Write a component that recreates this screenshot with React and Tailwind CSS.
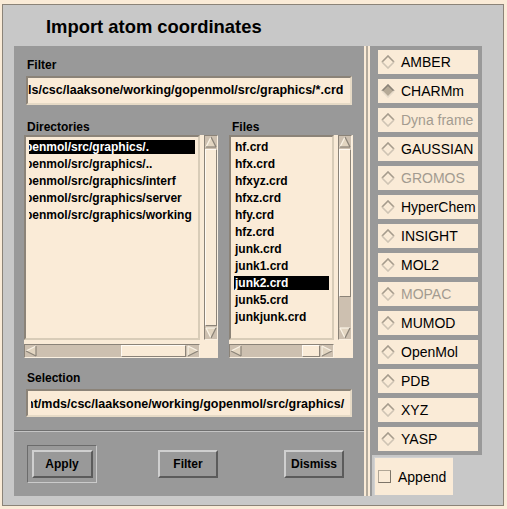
import React from "react";

function Arrow({ dir }) {
  const polys = {
    up: { p: "6,1 11,11 1,11", light: [[6, 1, 1, 11]], dark: [[6, 1, 11, 11], [1, 11, 11, 11]] },
    down: { p: "1,1 11,1 6,11", light: [[1, 1, 11, 1], [1, 1, 6, 11]], dark: [[11, 1, 6, 11]] },
    left: { p: "1,6 11,1 11,11", light: [[1, 6, 11, 1]], dark: [[11, 1, 11, 11], [1, 6, 11, 11]] },
    right: { p: "1,1 11,6 1,11", light: [[1, 1, 1, 11], [1, 1, 11, 6]], dark: [[1, 11, 11, 6]] },
  }[dir];
  return (
    <svg width="12" height="12" viewBox="0 0 12 12" className="block shrink-0">
      <polygon points={polys.p} fill="#e2d5c1" />
      {polys.light.map((l, i) => (
        <line key={"l" + i} x1={l[0]} y1={l[1]} x2={l[2]} y2={l[3]} stroke="#fbf3e6" strokeWidth="1.2" />
      ))}
      {polys.dark.map((l, i) => (
        <line key={"d" + i} x1={l[0]} y1={l[1]} x2={l[2]} y2={l[3]} stroke="#8b8378" strokeWidth="1.2" />
      ))}
    </svg>
  );
}

function VScroll({ full }) {
  return (
    <div className="w-[14px] h-[205px] bg-[#cdc0b0] border border-t-[#8b8378] border-l-[#8b8378] border-b-[#fbf1e2] border-r-[#fbf1e2] flex flex-col">
      <Arrow dir="up" />
      <div className="flex-1 flex flex-col my-[1px]">
        {full ? (
          <div className="flex-1 bg-[#faebd7] border border-t-[#fffaf3] border-l-[#fffaf3] border-b-[#8b8378] border-r-[#8b8378]" />
        ) : (
          <>
            <div className="h-[148px] bg-[#faebd7] border border-t-[#fffaf3] border-l-[#fffaf3] border-b-[#8b8378] border-r-[#8b8378]" />
            <div className="flex-1" />
          </>
        )}
      </div>
      <Arrow dir="down" />
    </div>
  );
}

function HScroll({ w, sliderW }) {
  return (
    <div
      className="h-[14px] bg-[#cdc0b0] border border-t-[#8b8378] border-l-[#8b8378] border-b-[#fbf1e2] border-r-[#fbf1e2] flex flex-row"
      style={{ width: w }}
    >
      <Arrow dir="left" />
      <div className="flex-1 flex flex-row justify-end mx-[1px]">
        <div
          className="h-full bg-[#faebd7] border border-t-[#fffaf3] border-l-[#fffaf3] border-b-[#8b8378] border-r-[#8b8378]"
          style={{ width: sliderW }}
        />
      </div>
      <Arrow dir="right" />
    </div>
  );
}

function ListRow({ text, selected, offset }) {
  return (
    <div className="h-[17px] shrink-0">
      <div
        className={
          "h-[14px] leading-[14px] text-[12px] font-bold whitespace-nowrap overflow-hidden " +
          (selected ? "bg-black text-white" : "text-black")
        }
      >
        <span className={offset ? "inline-block ml-[-4px]" : "inline-block ml-[1px]"}>{text}</span>
      </div>
    </div>
  );
}

function Diamond({ on }) {
  return (
    <svg width="14" height="14" viewBox="0 0 14 14" className="block shrink-0">
      <polygon points="7,1 13,7 7,13 1,7" fill={on ? "#b5a996" : "#faebd7"} />
      <polyline points="1,7 7,1 13,7" fill="none" stroke={on ? "#8b8378" : "#a59b8c"} strokeWidth="1.6" />
      <polyline points="1,7 7,13 13,7" fill="none" stroke={on ? "#e8dccb" : "#cfc4b4"} strokeWidth="1.6" />
    </svg>
  );
}

function Toggle({ label, on, disabled }) {
  return (
    <div className="h-[24px] w-[100px] bg-[#faebd7] flex items-center pl-[3px] gap-[6px]">
      <Diamond on={on} />
      <span className={"text-[14px] leading-[16px] whitespace-nowrap " + (disabled ? "text-[#a39b90]" : "text-black")}>
        {label}
      </span>
    </div>
  );
}

function Button({ label }) {
  return (
    <div className="w-[60px] h-[28px] bg-[#999999] border-2 border-t-[#cfcfcf] border-l-[#cfcfcf] border-b-[#5b5b5b] border-r-[#5b5b5b] flex items-center justify-center text-[12px] font-bold text-black">
      {label}
    </div>
  );
}

export default function App() {
  const dirs = [
    "penmol/src/graphics/.",
    "penmol/src/graphics/..",
    "penmol/src/graphics/interf",
    "penmol/src/graphics/server",
    "penmol/src/graphics/working",
  ];
  const files = [
    "hf.crd",
    "hfx.crd",
    "hfxyz.crd",
    "hfxz.crd",
    "hfy.crd",
    "hfz.crd",
    "junk.crd",
    "junk1.crd",
    "junk2.crd",
    "junk5.crd",
    "junkjunk.crd",
  ];
  const toggles = [
    ["AMBER"],
    ["CHARMm", true],
    ["Dyna frame", false, true],
    ["GAUSSIAN"],
    ["GROMOS", false, true],
    ["HyperChem"],
    ["INSIGHT"],
    ["MOL2"],
    ["MOPAC", false, true],
    ["MUMOD"],
    ["OpenMol"],
    ["PDB"],
    ["XYZ"],
    ["YASP"],
  ];

  return (
    <div className="w-[507px] h-[509px] bg-[#faebd7] pt-[4px] pl-[2px] pr-[3px] pb-[3px] font-['Liberation_Sans',Arial,sans-serif] overflow-hidden">
      <div className="w-full h-full border border-[#8b8378] bg-[#c8c8c8] flex flex-col">
        {/* Title */}
        <div className="h-[41px] shrink-0 pl-[43px] pt-[11px]">
          <div className="text-[18.4px] leading-[22px] font-bold text-black">Import atom coordinates</div>
        </div>

        {/* Body */}
        <div className="h-[450px] shrink-0 flex flex-row">
          {/* Left panel */}
          <div className="ml-[11px] w-[350px] h-full bg-[#999999] flex flex-col">
            <div className="mt-[12px] ml-[13px] h-[14px] leading-[14px] text-[12px] font-bold text-black">Filter</div>
            <div className="mt-[4px] ml-[12px] w-[326px] h-[29px] bg-[#faebd7] border-2 border-t-[#8b8378] border-l-[#8b8378] border-b-[#e6dac6] border-r-[#e6dac6] flex items-center overflow-hidden">
              <span className="text-[12.5px] font-bold text-black whitespace-nowrap">
                ls/csc/laaksone/working/gopenmol/src/graphics/*.crd
              </span>
            </div>

            <div className="mt-[15px] flex flex-row h-[14px]">
              <div className="ml-[13px] w-[205px] leading-[14px] text-[12px] font-bold text-black">Directories</div>
              <div className="leading-[14px] text-[12px] font-bold text-black">Files</div>
            </div>

            <div className="mt-[1px] flex flex-row">
              {/* Directories */}
              <div className="ml-[10px] w-[194px] h-[223px] bg-[#faebd7] flex flex-col">
                <div className="flex flex-row gap-[4px]">
                  <div className="w-[176px] h-[205px] border-2 border-t-[#8b8378] border-l-[#8b8378] border-b-[#d8ccb8] border-r-[#d8ccb8] px-[3px] pt-[3px] flex flex-col overflow-hidden">
                    {dirs.map((d, i) => (
                      <ListRow key={d} text={d} selected={i === 0} offset />
                    ))}
                  </div>
                  <VScroll full />
                </div>
                <div className="mt-[4px]">
                  <HScroll w={176} sliderW={65} />
                </div>
              </div>

              {/* Files */}
              <div className="ml-[11px] w-[124px] h-[223px] bg-[#faebd7] flex flex-col">
                <div className="flex flex-row gap-[4px]">
                  <div className="w-[105px] h-[205px] border-2 border-t-[#8b8378] border-l-[#8b8378] border-b-[#d8ccb8] border-r-[#d8ccb8] px-[3px] pt-[3px] flex flex-col overflow-hidden">
                    {files.map((f, i) => (
                      <ListRow key={f} text={f} selected={i === 8} />
                    ))}
                  </div>
                  <VScroll />
                </div>
                <div className="mt-[4px]">
                  <HScroll w={105} sliderW={18} />
                </div>
              </div>
            </div>

            <div className="mt-[13px] ml-[13px] h-[14px] leading-[14px] text-[12px] font-bold text-black">Selection</div>
            <div className="mt-[4px] ml-[12px] w-[326px] h-[28px] bg-[#faebd7] border-2 border-t-[#8b8378] border-l-[#8b8378] border-b-[#e6dac6] border-r-[#e6dac6] flex items-center">
              <div className="ml-[3px] flex-1 overflow-hidden">
                <span className="inline-block ml-[-5px] text-[12.5px] font-bold text-black whitespace-nowrap">
                  nt/mds/csc/laaksone/working/gopenmol/src/graphics/
                </span>
              </div>
            </div>

            <div className="mt-[13px] h-[2px] border-t border-t-[#6f6f6f] border-b border-b-[#c4c4c4]" />

            <div className="mt-[13px] flex flex-row items-center pl-[13px]">
              <div className="w-[70px] h-[38px] border border-t-[#6b6b6b] border-l-[#6b6b6b] border-b-[#cbcbcb] border-r-[#cbcbcb] flex items-center justify-center">
                <div className="w-[61px] h-[28px] bg-[#999999] border-2 border-t-[#cfcfcf] border-l-[#cfcfcf] border-b-[#5b5b5b] border-r-[#5b5b5b] flex items-center justify-center text-[12px] font-bold text-black">
                  Apply
                </div>
              </div>
              <div className="ml-[61px]">
                <Button label="Filter" />
              </div>
              <div className="ml-[66px]">
                <Button label="Dismiss" />
              </div>
            </div>
          </div>

          {/* Separator */}
          <div className="w-[8px] h-full flex flex-row">
            <div className="w-[2px] h-full bg-[#faebd7]" />
            <div className="w-[2px] h-full bg-[#b3aa9c]" />
            <div className="w-[2px] h-full bg-[#faebd7]" />
            <div className="w-[2px] h-full bg-[#999999]" />
          </div>

          {/* Right column */}
          <div className="w-[110px] h-full flex flex-col">
            <div className="h-[409px] bg-[#999999] pt-[4px] pl-[6px] flex flex-col gap-[5px]">
              {toggles.map(([l, on, dis]) => (
                <Toggle key={l} label={l} on={on} disabled={dis} />
              ))}
            </div>
            <div className="mt-[2px] ml-[2px] w-[79px] h-[38px] bg-[#faebd7] border-t border-l border-[#d2d2d2] flex items-center pl-[3px] gap-[7px]">
              <div className="w-[13px] h-[13px] bg-[#faebd7] border border-t-[#b0a696] border-l-[#b0a696] border-b-[#7d7569] border-r-[#7d7569]" />
              <span className="text-[14px] leading-[16px] text-black">Append</span>
            </div>
          </div>
        </div>
      </div>
    </div>
  );
}
